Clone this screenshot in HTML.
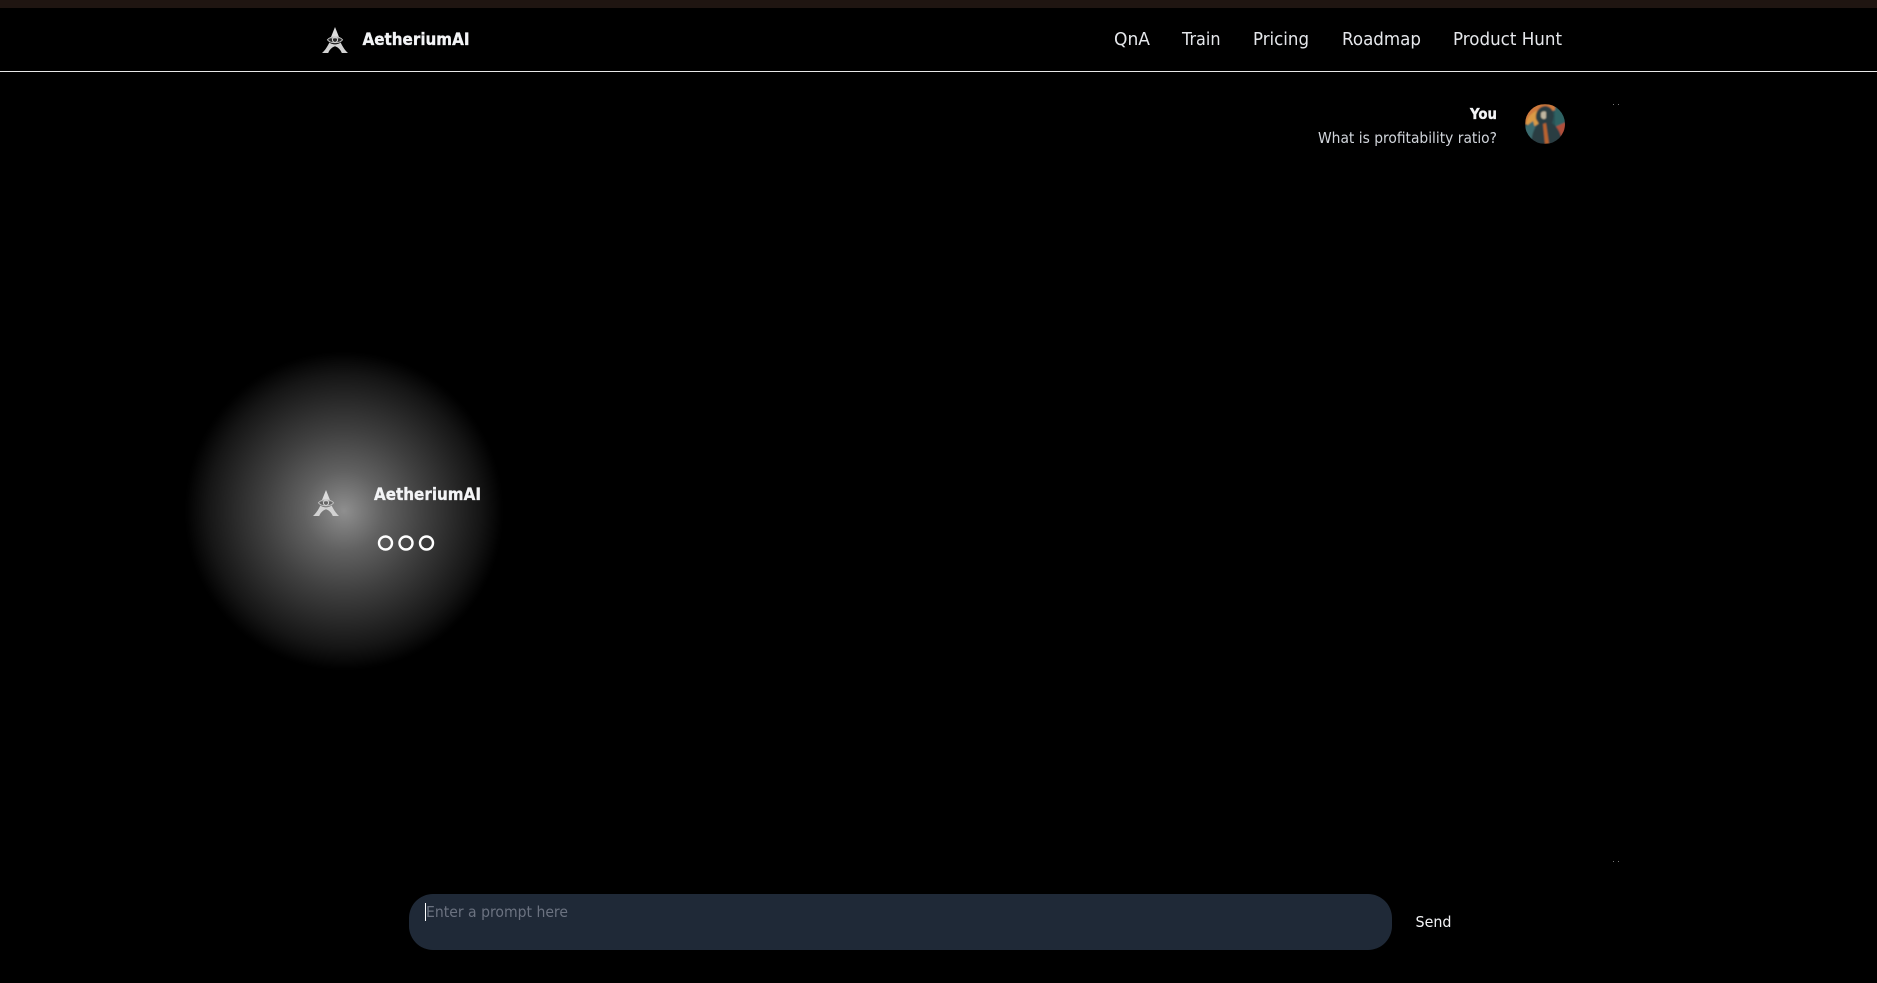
<!DOCTYPE html>
<html lang="en">
<head>
<meta charset="utf-8">
<title>AetheriumAI</title>
<style>
html,body{margin:0;padding:0;background:#000;width:1877px;height:983px;overflow:hidden}
svg{display:block}
text{font-family:"DejaVu Sans","Liberation Sans",sans-serif}
.b{stroke:#f3f4f6;stroke-width:.35px}
</style>
</head>
<body>
<svg width="1877" height="983" viewBox="0 0 1877 983" xmlns="http://www.w3.org/2000/svg">
<defs>
<radialGradient id="glow" gradientUnits="userSpaceOnUse" cx="344" cy="511" r="160">
<stop offset="0" stop-color="#fff" stop-opacity=".56"/>
<stop offset=".25" stop-color="#fff" stop-opacity=".38"/>
<stop offset=".5" stop-color="#fff" stop-opacity=".25"/>
<stop offset=".67" stop-color="#fff" stop-opacity=".17"/>
<stop offset=".85" stop-color="#fff" stop-opacity=".085"/>
<stop offset=".98" stop-color="#fff" stop-opacity=".008"/>
<stop offset="1" stop-color="#fff" stop-opacity="0"/>
</radialGradient>
<filter id="soft" x="-10%" y="-10%" width="120%" height="120%"><feGaussianBlur stdDeviation=".7"/></filter>
<clipPath id="av"><circle cx="1545" cy="124" r="20"/></clipPath>
<symbol id="logo" viewBox="0 0 26 26">
<path d="M13 0L17.600 11.500H8.400Z" fill="#dcdcdc"/>
<path d="M7.400 15.500C5.200 20 2.500 24 0 26H6.200C7.400 22.800 9.800 20.200 13 19.200C16.200 20.200 18.600 22.800 19.800 26H26C23.500 24 20.800 20 18.600 15.500C17 16.800 15 17.400 13 17.400C11 17.400 9 16.800 7.400 15.500Z" fill="#d2d2d2"/>
<path d="M5.400 12.800C8.600 8.800 17.400 8.800 20.600 12.800C17.400 16.800 8.600 16.800 5.400 12.800Z" fill="#555" fill-opacity=".5" stroke="#bdbdbd" stroke-width=".9"/>
<circle cx="13" cy="12.800" r="2.600" fill="none" stroke="#d6d6d6" stroke-width="1"/>
</symbol>
</defs>

<rect width="1877" height="983" fill="#000"/>
<rect width="1877" height="8" fill="#1f1511"/>
<rect y="71" width="1877" height="1" fill="#e8e8e8"/>

<use href="#logo" x="322" y="27" width="26" height="26"/>
<text class="b" x="362.500" y="45" font-size="17" font-weight="700" fill="#f3f4f6" textLength="107" lengthAdjust="spacingAndGlyphs">AetheriumAI</text>

<g font-size="17.500" fill="#e5e7eb">
<text x="1114" y="45" textLength="36" lengthAdjust="spacingAndGlyphs">QnA</text>
<text x="1182" y="45" textLength="38.500" lengthAdjust="spacingAndGlyphs">Train</text>
<text x="1253" y="45" textLength="56" lengthAdjust="spacingAndGlyphs">Pricing</text>
<text x="1342" y="45" textLength="79" lengthAdjust="spacingAndGlyphs">Roadmap</text>
<text x="1453" y="45" textLength="109" lengthAdjust="spacingAndGlyphs">Product Hunt</text>
</g>

<text class="b" x="1470" y="119" font-size="15" font-weight="700" fill="#f3f4f6" textLength="27" lengthAdjust="spacingAndGlyphs">You</text>
<text x="1318" y="143" font-size="15.500" fill="#d1d5db" textLength="179" lengthAdjust="spacingAndGlyphs">What is profitability ratio?</text>

<g clip-path="url(#av)">
<g filter="url(#soft)">
<rect x="1525" y="104" width="40" height="40" fill="#2c5257"/>
<path d="M1525 104H1555V110L1538 116L1527 124H1525Z" fill="#cf7a3e"/>
<path d="M1526 124C1527 117 1532 112 1539 110L1541 122L1532 128Z" fill="#d99a45"/>
<path d="M1525 127L1533 121L1540 144H1525Z" fill="#3a6a6e"/>
<path d="M1555 127L1566 122V140L1555 144Z" fill="#b0503a"/>
<path d="M1555 104H1566V122L1555 127Z" fill="#2f6264"/>
<path d="M1536 119C1535 111 1540 106 1546 106C1552 107 1555 113 1553 120L1552 123C1558 127 1562 135 1562 144H1531C1532 134 1534 127 1539 124Z" fill="#2a3e42"/>
<path d="M1541 113C1542 111 1545 111 1546 112L1546 118C1544 120 1542 119 1541 117Z" fill="#bfb6a0"/>
<path d="M1543 124L1546 123L1549 144H1545Z" fill="#b9642f"/>
</g>
</g>

<rect x="1613" y="104" width="1" height="1" fill="#777"/>
<rect x="1618" y="104" width="1" height="1" fill="#777"/>
<rect x="1613" y="861" width="1" height="1" fill="#777"/>
<rect x="1618" y="861" width="1" height="1" fill="#777"/>

<circle cx="344" cy="511" r="160" fill="url(#glow)"/>
<use href="#logo" x="313" y="490" width="26" height="26"/>
<text class="b" x="374" y="500" font-size="17" font-weight="700" fill="#f3f4f6" textLength="107" lengthAdjust="spacingAndGlyphs">AetheriumAI</text>
<g fill="none" stroke="#fff" stroke-width="2.400">
<circle cx="385.500" cy="543" r="6.500"/>
<circle cx="406" cy="543" r="6.500"/>
<circle cx="426.500" cy="543" r="6.500"/>
</g>

<rect x="409" y="894" width="983" height="56" rx="24" ry="24" fill="#1f2937"/>
<rect x="425" y="903" width="1" height="18" fill="#fff"/>
<text x="426" y="917" font-size="15.500" fill="#6b7280" textLength="142" lengthAdjust="spacingAndGlyphs">Enter a prompt here</text>
<text x="1415.500" y="927" font-size="15.500" font-weight="500" fill="#f3f4f6" textLength="36" lengthAdjust="spacingAndGlyphs">Send</text>
</svg>
</body>
</html>
